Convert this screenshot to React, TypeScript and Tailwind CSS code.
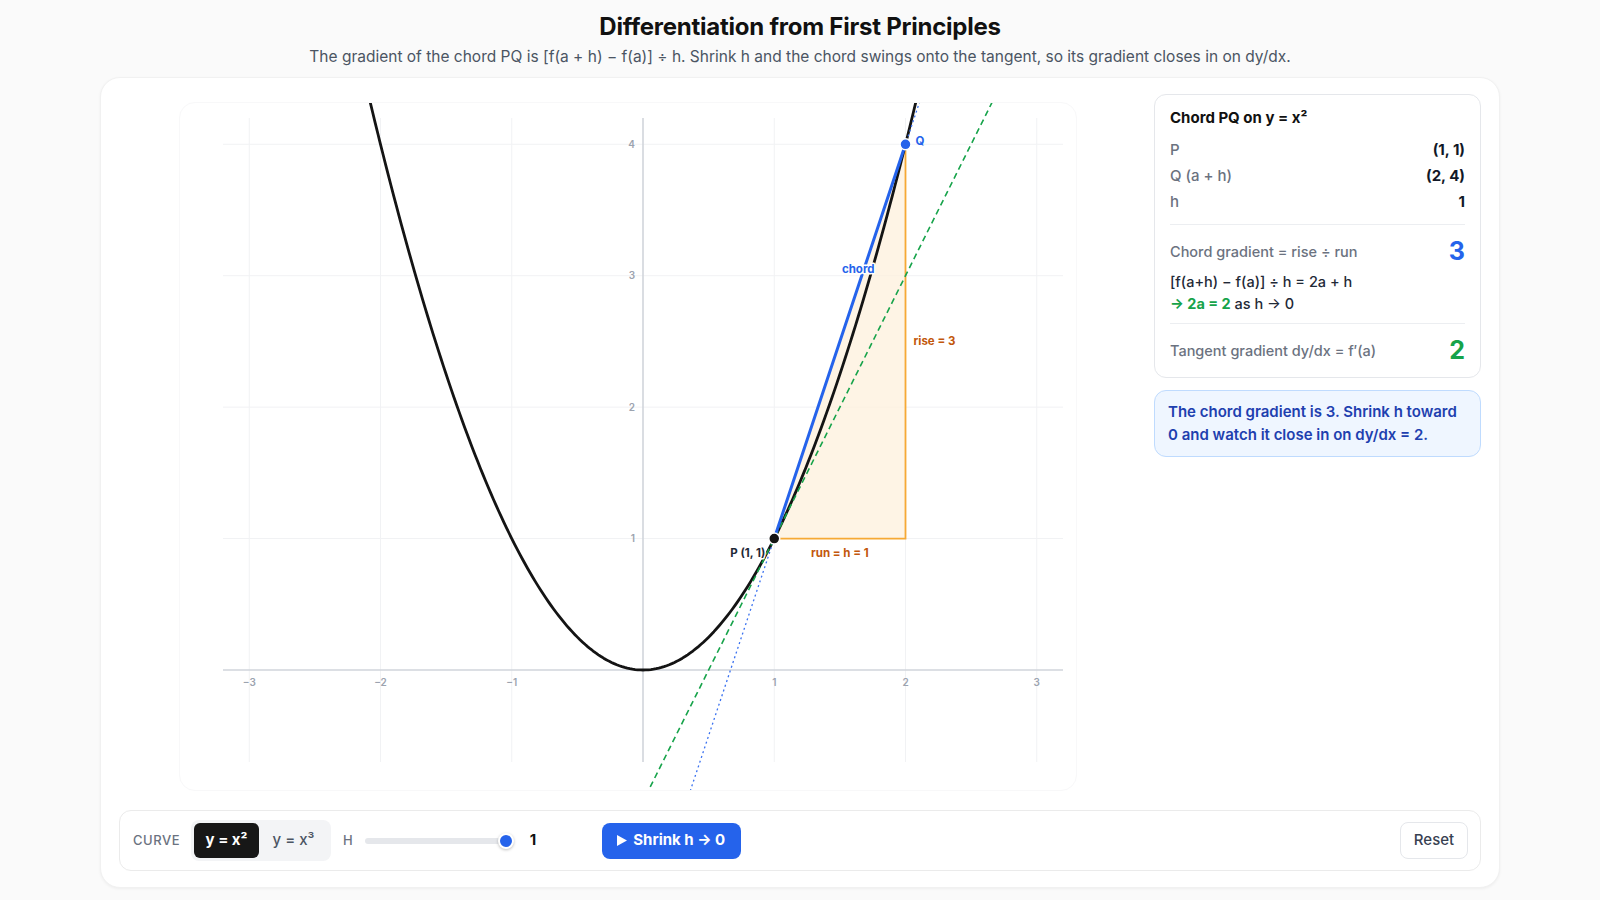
import { useState } from "react";

const W = 898;
const H = 689;
const padL = 43;
const padR = 15;
const padT = 15;
const padB = 30;
const xmin = -3.2;
const xmax = 3.2;
const ymin = -0.7;
const ymax = 4.2;
const sx = (W - padL - padR) / (xmax - xmin);
const sy = (H - padT - padB) / (ymax - ymin);
const X = (x: number) => padL + (x - xmin) * sx;
const Y = (y: number) => padT + (ymax - y) * sy;

function linePath(f: (x: number) => number, a: number, b: number, step = 0.02) {
  let d = "";
  for (let x = a; x <= b + 1e-9; x += step) {
    d += (d ? "L" : "M") + X(x).toFixed(2) + " " + Y(f(x)).toFixed(2);
  }
  return d;
}

function Graph({ a, h }: { a: number; h: number }) {
  const f = (x: number) => x * x;
  const fa = f(a);
  const b = a + h;
  const fb = f(b);
  const m = (fb - fa) / h;
  const t = 2 * a;
  const ticksX = [-3, -2, -1, 1, 2, 3];
  const ticksY = [1, 2, 3, 4];
  const halo = { stroke: "#fff", strokeWidth: 3, paintOrder: "stroke" as const, strokeLinejoin: "round" as const };

  return (
    <svg width={W} height={H} viewBox={`0 0 ${W} ${H}`} className="block">
      {/* grid */}
      {ticksX.map((k) => (
        <line key={"gx" + k} x1={X(k)} x2={X(k)} y1={Y(ymax)} y2={Y(ymin)} stroke="#f1f2f4" strokeWidth={1} />
      ))}
      {ticksY.map((k) => (
        <line key={"gy" + k} x1={X(xmin)} x2={X(xmax)} y1={Y(k)} y2={Y(k)} stroke="#f1f2f4" strokeWidth={1} />
      ))}
      {/* axes */}
      <line x1={X(xmin)} x2={X(xmax)} y1={Y(0)} y2={Y(0)} stroke="#d1d5db" strokeWidth={1.6} />
      <line x1={X(0)} x2={X(0)} y1={Y(ymax)} y2={Y(ymin)} stroke="#d1d5db" strokeWidth={1.6} />
      {ticksX.map((k) => (
        <text key={"tx" + k} x={X(k)} y={Y(0) + 16} textAnchor="middle" fontSize={10} fontWeight={600} fill="#9ca3af">
          {k < 0 ? "−" + Math.abs(k) : k}
        </text>
      ))}
      {ticksY.map((k) => (
        <text key={"ty" + k} x={X(0) - 8} y={Y(k) + 3.5} textAnchor="end" fontSize={10} fontWeight={600} fill="#9ca3af">
          {k}
        </text>
      ))}

      {/* rise / run triangle */}
      <polygon
        points={`${X(a)},${Y(fa)} ${X(b)},${Y(fa)} ${X(b)},${Y(fb)}`}
        fill="#fdf0dc"
        fillOpacity={0.75}
      />
      <polyline
        points={`${X(a)},${Y(fa)} ${X(b)},${Y(fa)} ${X(b)},${Y(fb)}`}
        fill="none"
        stroke="#f6a935"
        strokeWidth={1.8}
      />

      {/* curve */}
      <path d={linePath(f, -3.4, 3.4)} fill="none" stroke="#141414" strokeWidth={2.8} strokeLinejoin="round" />

      {/* secant extension */}
      <path
        d={linePath((x) => fa + m * (x - a), -1, 3, 4)}
        fill="none"
        stroke="#3b72f0"
        strokeWidth={1.3}
        strokeDasharray="2 3"
      />
      {/* tangent */}
      <path
        d={linePath((x) => fa + t * (x - a), -1, 3.5, 4.5)}
        fill="none"
        stroke="#16a34a"
        strokeWidth={1.6}
        strokeDasharray="6 4"
      />
      {/* chord */}
      <line x1={X(a)} y1={Y(fa)} x2={X(b)} y2={Y(fb)} stroke="#2563eb" strokeWidth={3} strokeLinecap="round" />

      {/* labels */}
      <text x={X(1.64)} y={Y(3) - 3} textAnchor="middle" fontSize={11.5} fontWeight={700} fill="#2563eb" {...halo}>
        chord
      </text>
      <text x={X(b) + 8} y={Y((fa + fb) / 2) + 4} fontSize={11.5} fontWeight={700} fill="#c2570c">
        rise = 3
      </text>
      <text x={X((a + b) / 2)} y={Y(fa) + 18} textAnchor="middle" fontSize={11.5} fontWeight={700} fill="#c2570c">
        run = h = 1
      </text>
      <text x={X(a) - 9} y={Y(fa) + 18} textAnchor="end" fontSize={11.5} fontWeight={700} fill="#1f2937" {...halo}>
        P (1, 1)
      </text>
      <text x={X(b) + 10} y={Y(fb) + 0.5} fontSize={11.5} fontWeight={700} fill="#2563eb">
        Q
      </text>

      {/* points */}
      <circle cx={X(a)} cy={Y(fa)} r={5.5} fill="#141414" stroke="#fff" strokeWidth={1.5} />
      <circle cx={X(b)} cy={Y(fb)} r={5.5} fill="#2563eb" stroke="#fff" strokeWidth={1.5} />
    </svg>
  );
}

function StatRow({ label, value }: { label: string; value: string }) {
  return (
    <div className="flex items-center justify-between leading-[26px] text-[15px]">
      <span className="font-medium text-[#6b7280]">{label}</span>
      <span className="font-bold text-[#111827]">{value}</span>
    </div>
  );
}

export default function App() {
  const [curve, setCurve] = useState<"x2" | "x3">("x2");
  const h = 1;

  return (
    <div className="min-h-screen bg-[#fafafa] font-['Inter',sans-serif] text-[#111827]">
      <header className="pt-[11px] text-center">
        <h1 className="text-[24px] font-bold leading-8 tracking-[-0.01em] text-[#111]">
          Differentiation from First Principles
        </h1>
        <p className="mt-[4px] text-[15.5px] leading-5 text-[#4b5563]">
          The gradient of the chord PQ is [f(a + h) − f(a)] ÷ h. Shrink h and the chord swings onto the tangent, so its
          gradient closes in on dy/dx.
        </p>
      </header>

      <main className="mx-auto mt-[10px] w-[1400px] rounded-[20px] border border-[#f1f1f1] bg-white pb-4 pl-[18px] pr-[18px] pt-4 shadow-[0_1px_3px_rgba(0,0,0,0.05)]">
        <div className="flex gap-[18px]">
          <div className="flex flex-1 justify-center pt-2">
            <div className="h-[689px] w-[898px] overflow-hidden rounded-2xl border border-[#f8f8f9]">
              <Graph a={1} h={h} />
            </div>
          </div>

          <aside className="w-[327px] shrink-0">
            <div className="rounded-xl border border-[#e5e7eb] bg-white px-[15px] pb-[10px] pt-[13px]">
              <div className="text-[15px] font-bold leading-5 text-[#111]">Chord PQ on y = x²</div>
              <div className="mt-[9px]">
                <StatRow label="P" value="(1, 1)" />
                <StatRow label="Q (a + h)" value="(2, 4)" />
                <StatRow label="h" value="1" />
              </div>
              <div className="mt-[9px] border-t border-[#eceef1]" />
              <div className="mt-[11px] flex h-8 items-center justify-between">
                <span className="text-[14.5px] font-medium text-[#6b7280]">Chord gradient = rise ÷ run</span>
                <span className="text-[25px] font-bold text-[#2563eb]">3</span>
              </div>
              <div className="mt-[3px] text-[14.5px] font-medium leading-[22px] text-[#1f2937]">
                [f(a+h) − f(a)] ÷ h = 2a + h
              </div>
              <div className="text-[14.5px] font-medium leading-[22px] text-[#1f2937]">
                <span className="font-bold text-[#16a34a]">→ 2a = 2</span> as h → 0
              </div>
              <div className="mt-2 border-t border-[#eceef1]" />
              <div className="mt-[11px] flex h-8 items-center justify-between">
                <span className="text-[14.5px] font-medium text-[#6b7280]">Tangent gradient dy/dx = f′(a)</span>
                <span className="text-[25px] font-bold text-[#16a34a]">2</span>
              </div>
            </div>

            <div className="mt-3 rounded-xl border border-[#bfdbfe] bg-[#eff6ff] px-[13px] py-[10px] text-[15px] font-semibold leading-[22.5px] text-[#1e40af]">
              The chord gradient is 3. Shrink h toward 0 and watch it close in on dy/dx = 2.
            </div>
          </aside>
        </div>

        <div className="mt-[19px] flex h-[61px] items-center rounded-xl border border-[#ebebeb] bg-white pl-[13px] pr-3">
          <span className="text-[13px] font-medium tracking-[0.04em] text-[#6b7280]">CURVE</span>
          <div className="ml-[11px] flex rounded-lg bg-[#f3f4f6] p-[3px]">
            <button
              onClick={() => setCurve("x2")}
              className={
                curve === "x2"
                  ? "h-[35px] w-[65px] rounded-md bg-[#171717] text-[15px] font-bold text-white"
                  : "h-[35px] w-[65px] rounded-md text-[15px] font-medium text-[#4b5563]"
              }
            >
              y = x²
            </button>
            <button
              onClick={() => setCurve("x3")}
              className={
                curve === "x3"
                  ? "h-[35px] w-[69px] rounded-md bg-[#171717] text-[15px] font-bold text-white"
                  : "h-[35px] w-[69px] rounded-md text-[15px] font-medium text-[#4b5563]"
              }
            >
              y = x³
            </button>
          </div>
          <span className="ml-[12px] text-[13px] font-medium text-[#6b7280]">H</span>
          <div className="relative ml-[12px] h-[6px] w-[148px] rounded-full bg-[#e5e7eb]">
            <div className="absolute right-[-1px] top-1/2 h-[16px] w-[16px] -translate-y-1/2 rounded-full border-2 border-white bg-[#2563eb] shadow-[0_1px_3px_rgba(0,0,0,0.25)]" />
          </div>
          <span className="ml-[17px] w-[20px] text-[15px] font-bold text-[#111]">{h}</span>
          <button className="ml-[52px] flex h-[36px] w-[139px] items-center justify-center gap-[6px] rounded-lg bg-[#2563eb] text-[15px] font-bold text-white">
            <svg width="10" height="11" viewBox="0 0 10 11">
              <polygon points="0,0 10,5.5 0,11" fill="#fff" />
            </svg>
            Shrink h → 0
          </button>
          <button className="ml-auto h-[37px] w-[68px] rounded-lg border border-[#e5e7eb] bg-white text-[15px] font-medium text-[#374151]">
            Reset
          </button>
        </div>
      </main>
    </div>
  );
}
